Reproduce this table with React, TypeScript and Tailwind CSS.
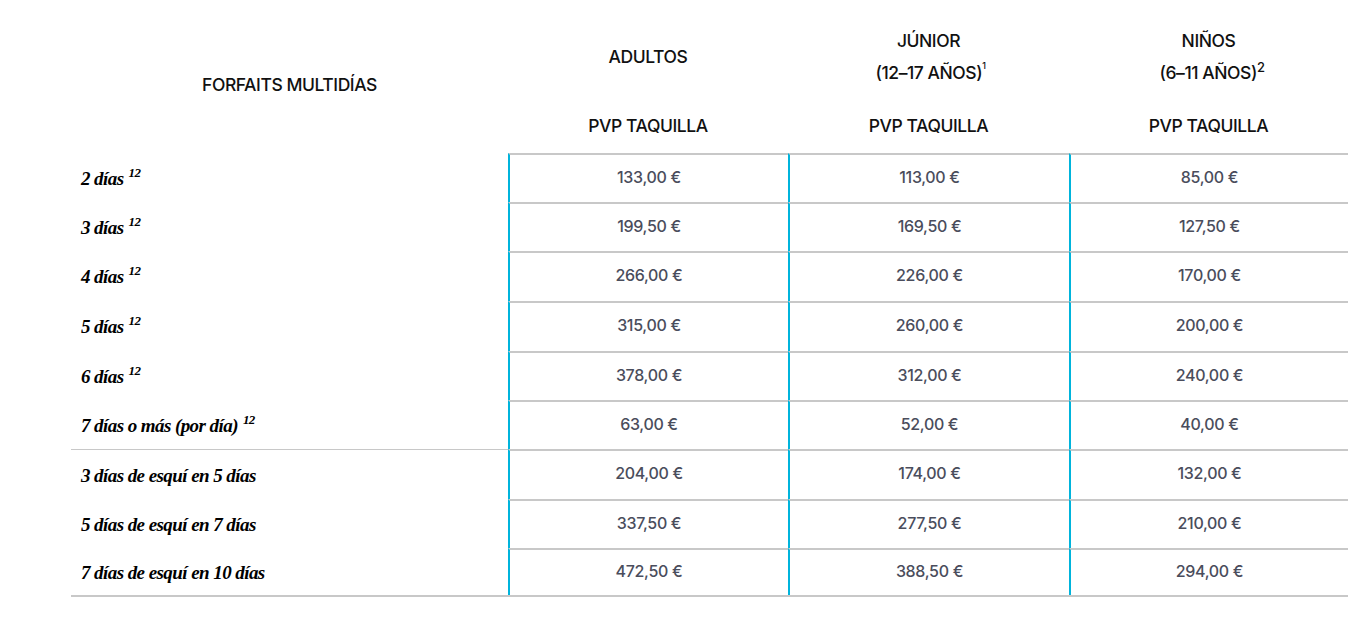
import React from 'react';

type Row = {
  label: string;
  sup?: boolean;
  prices: [string, string, string];
  h: string;
  sepTop?: boolean;
};

const ROWS: Row[] = [
  { label: '2 días', sup: true, prices: ['133,00 €', '113,00 €', '85,00 €'], h: 'h-[49px]' },
  { label: '3 días', sup: true, prices: ['199,50 €', '169,50 €', '127,50 €'], h: 'h-[49px]' },
  { label: '4 días', sup: true, prices: ['266,00 €', '226,00 €', '170,00 €'], h: 'h-[50px]' },
  { label: '5 días', sup: true, prices: ['315,00 €', '260,00 €', '200,00 €'], h: 'h-[50px]' },
  { label: '6 días', sup: true, prices: ['378,00 €', '312,00 €', '240,00 €'], h: 'h-[49px]' },
  { label: '7 días o más (por día)', sup: true, prices: ['63,00 €', '52,00 €', '40,00 €'], h: 'h-[49px]' },
  { label: '3 días de esquí en 5 días', prices: ['204,00 €', '174,00 €', '132,00 €'], h: 'h-[50px]', sepTop: true },
  { label: '5 días de esquí en 7 días', prices: ['337,50 €', '277,50 €', '210,00 €'], h: 'h-[49px]' },
  { label: '7 días de esquí en 10 días', prices: ['472,50 €', '388,50 €', '294,00 €'], h: 'h-[49px]' },
];

const sans = "font-['Inter',sans-serif]";

const HeaderCol = ({ children, w }: { children: React.ReactNode; w: string }) => (
  <div className={`${w} flex flex-col items-center text-[17.5px] font-medium text-[#111] tracking-[-0.025em] ${sans}`}>
    <div className="h-[114px] flex flex-col items-center justify-center leading-[32px] text-center">{children}</div>
    <div className="leading-[24px]">PVP TAQUILLA</div>
  </div>
);

export default function App() {
  const colW = ['w-[280px]', 'w-[281px]', 'w-[279px]'];
  return (
    <div className="w-[1348px] h-[638px] bg-white pl-[71px] overflow-hidden">
      {/* Header */}
      <div className="flex h-[153px]">
        <div className={`w-[437px] flex items-center justify-center pt-[17px] text-[17.5px] font-medium text-[#111] tracking-[-0.025em] ${sans}`}>
          FORFAITS MULTIDÍAS
        </div>
        <HeaderCol w={colW[0]}>ADULTOS</HeaderCol>
        <HeaderCol w={colW[1]}>
          <span>JÚNIOR</span>
          <span className="pl-[4px]">
            (12–17 AÑOS)<span className="relative -top-[10px] text-[9px] leading-none">1</span>
          </span>
        </HeaderCol>
        <HeaderCol w={colW[2]}>
          <span>NIÑOS</span>
          <span className="pl-[7px]">
            (6–11 AÑOS)<span className="relative -top-[7px] text-[13px] leading-none">2</span>
          </span>
        </HeaderCol>
      </div>

      {/* Body */}
      {ROWS.map((r, i) => {
        const last = i === ROWS.length - 1;
        return (
          <div key={r.label} className={`flex ${r.h} ${last ? 'border-b-2 border-[#c8c8c8]' : ''}`}>
            <div
              className={`w-[437px] flex items-center pl-[10px] pt-[3px] font-['Liberation_Serif',serif] italic font-bold text-[19px] text-black tracking-[-0.03em] ${
                r.sepTop ? 'border-t border-[#c8c8c8]' : ''
              }`}
            >
              {r.label}
              {r.sup && <span className="ml-[5px] text-[13px] leading-none relative -top-[7px]">12</span>}
            </div>
            {r.prices.map((p, j) => (
              <div
                key={j}
                className={`${colW[j]} flex items-center justify-center pb-[4px] border-l-2 border-l-[#00b4dc] border-t-2 border-t-[#c8c8c8] text-[16px] font-medium text-[#4a4d5c] tracking-[-0.02em] ${sans}`}
              >
                {p}
              </div>
            ))}
          </div>
        );
      })}
    </div>
  );
}
